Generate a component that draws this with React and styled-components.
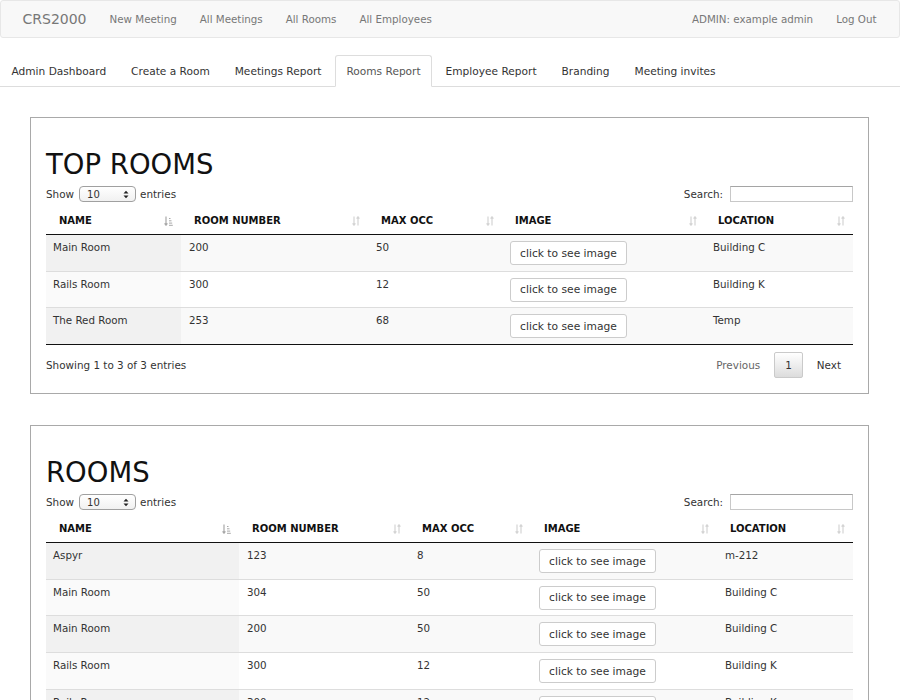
import React from "react";
import styled, { createGlobalStyle } from "styled-components";

const GlobalStyle = createGlobalStyle`
  body {
    margin: 0;
    background: #ffffff;
    color: #333333;
    font-family: "DejaVu Sans", Verdana, sans-serif;
    font-size: 10.4px;
  }
  * { box-sizing: border-box; }
`;

const topRooms = [
  ["Main Room", "200", "50", "Building C"],
  ["Rails Room", "300", "12", "Building K"],
  ["The Red Room", "253", "68", "Temp"],
];

const allRooms = [
  ["Aspyr", "123", "8", "m-212"],
  ["Main Room", "304", "50", "Building C"],
  ["Main Room", "200", "50", "Building C"],
  ["Rails Room", "300", "12", "Building K"],
  ["Rails Room", "300", "12", "Building K"],
  ["The Red Room", "253", "68", "Temp"],
];

const columns = ["NAME", "ROOM NUMBER", "MAX OCC", "IMAGE", "LOCATION"];

function SortBoth() {
  return (
    <svg width="8" height="10" viewBox="0 0 8 10">
      <g stroke="#d4d4d4" strokeWidth="1.2" fill="none">
        <path d="M2 0.5v8.5M0.6 7.4L2 9.2 3.4 7.4" />
        <path d="M6 9.5V1M4.6 2.6L6 0.8 7.4 2.6" />
      </g>
    </svg>
  );
}

function SortAsc() {
  return (
    <svg width="9" height="10" viewBox="0 0 9 10">
      <g stroke="#a8a8a8" strokeWidth="1.2" fill="none">
        <path d="M2 0.5v8.5M0.6 7.4L2 9.2 3.4 7.4" />
        <path d="M5 2.5h1.5M5 4.8h2.5M5 7.1h3.2M5 9.3h3.8" strokeWidth="1" />
      </g>
    </svg>
  );
}

function SelectArrows() {
  return (
    <svg width="6" height="9" viewBox="0 0 6 9">
      <path d="M0.5 3.6L3 0.8 5.5 3.6z M0.5 5.4L3 8.2 5.5 5.4z" fill="#222" />
    </svg>
  );
}

function RoomsTable({ title, rows, widths }) {
  return (
    <Panel>
      <Title>{title}</Title>
      <Controls>
        <Length>
          Show
          <FakeSelect>
            <span>10</span>
            <SelectArrows />
          </FakeSelect>
          entries
        </Length>
        <Filter>
          Search:
          <SearchInput type="text" />
        </Filter>
      </Controls>
      <Table>
        <colgroup>
          {widths.map((w, i) => (
            <col key={i} style={{ width: w }} />
          ))}
        </colgroup>
        <thead>
          <tr>
            {columns.map((c, i) => (
              <Th key={c}>
                <HeadInner>
                  <span>{c}</span>
                  {i === 0 ? <SortAsc /> : <SortBoth />}
                </HeadInner>
              </Th>
            ))}
          </tr>
        </thead>
        <tbody>
          {rows.map((r, i) => (
            <Row key={i} $odd={i % 2 === 0}>
              <SortedCell>{r[0]}</SortedCell>
              <Td>{r[1]}</Td>
              <Td>{r[2]}</Td>
              <Td>
                <ImageButton>click to see image</ImageButton>
              </Td>
              <Td>{r[3]}</Td>
            </Row>
          ))}
        </tbody>
      </Table>
      <Footer>
        <span>
          Showing 1 to {rows.length} of {rows.length} entries
        </span>
        <Paginate>
          <PageButton $disabled>Previous</PageButton>
          <PageButton $current>1</PageButton>
          <PageButton>Next</PageButton>
        </Paginate>
      </Footer>
    </Panel>
  );
}

export default function App() {
  return (
    <>
      <GlobalStyle />
      <Navbar>
        <NavLeft>
          <Brand>CRS2000</Brand>
          <NavLink>New Meeting</NavLink>
          <NavLink>All Meetings</NavLink>
          <NavLink>All Rooms</NavLink>
          <NavLink>All Employees</NavLink>
        </NavLeft>
        <NavLeft>
          <NavLink>ADMIN: example admin</NavLink>
          <NavLink>Log Out</NavLink>
        </NavLeft>
      </Navbar>
      <Tabs>
        <Tab>Admin Dashboard</Tab>
        <Tab>Create a Room</Tab>
        <Tab>Meetings Report</Tab>
        <Tab $active>Rooms Report</Tab>
        <Tab>Employee Report</Tab>
        <Tab>Branding</Tab>
        <Tab>Meeting invites</Tab>
      </Tabs>
      <Page>
        <RoomsTable
          title="TOP ROOMS"
          rows={topRooms}
          widths={[135, 187, 134, 203, 148]}
        />
        <RoomsTable
          title="ROOMS"
          rows={allRooms}
          widths={[193, 170, 122, 186, 136]}
        />
      </Page>
    </>
  );
}

const Navbar = styled.nav`
  height: 38px;
  display: flex;
  align-items: center;
  justify-content: space-between;
  padding: 0 11px 0 10px;
  background: #f8f8f8;
  border: 1px solid #e7e7e7;
  border-radius: 3px;
  margin-bottom: 17px;
`;

const NavLeft = styled.div`
  display: flex;
  align-items: center;
`;

const Brand = styled.span`
  font-size: 14px;
  color: #777777;
  padding: 0 11.5px;
`;

const NavLink = styled.span`
  font-size: 10.3px;
  color: #777777;
  padding: 0 11.5px;
`;

const Tabs = styled.ul`
  display: flex;
  list-style: none;
  margin: 0;
  padding: 0;
  border-bottom: 1px solid #dddddd;
`;

const Tab = styled.li`
  font-size: 10.6px;
  line-height: 15px;
  padding: 7.5px 10.5px;
  margin-right: 2px;
  margin-bottom: -1px;
  color: ${(p) => (p.$active ? "#555555" : "#333333")};
  background: ${(p) => (p.$active ? "#ffffff" : "transparent")};
  border: 1px solid ${(p) => (p.$active ? "#dddddd" : "transparent")};
  border-bottom-color: transparent;
  border-radius: 3px 3px 0 0;
`;

const Page = styled.main`
  padding: 30px 31px 0 30px;
  display: flex;
  flex-direction: column;
  gap: 31px;
`;

const Panel = styled.section`
  border: 1px solid #a9a9a9;
  padding: 0 15px 15px;
`;

const Title = styled.h1`
  margin: 31px 0 6px;
  font-size: 27.5px;
  line-height: 30px;
  font-weight: normal;
  color: #111111;
`;

const Controls = styled.div`
  display: flex;
  justify-content: space-between;
  align-items: center;
  height: 18px;
  margin-bottom: 3px;
`;

const Length = styled.label`
  display: flex;
  align-items: center;
  gap: 4px;
`;

const FakeSelect = styled.span`
  display: inline-flex;
  align-items: center;
  justify-content: space-between;
  width: 57px;
  height: 16px;
  padding: 0 6px 0 7px;
  border: 1px solid #a0a0a0;
  border-radius: 4px;
  background: linear-gradient(#ffffff, #f1f1f1);
  font-size: 10px;
  margin-left: 1px;
`;

const Filter = styled.label`
  display: flex;
  align-items: center;
  gap: 7px;
`;

const SearchInput = styled.input`
  width: 123px;
  height: 16px;
  border: 1px solid #c8c8c8;
  border-top-color: #a5a5a5;
  padding: 0 3px;
  font: inherit;
`;

const Table = styled.table`
  width: 100%;
  table-layout: fixed;
  border-collapse: collapse;
  border-bottom: 1px solid #111111;
`;

const Th = styled.th`
  padding: 8px 8px 7px 13px;
  font-size: 10px;
  line-height: 13px;
  font-weight: bold;
  text-align: left;
  color: #111111;
  border-bottom: 1px solid #111111;
`;

const HeadInner = styled.div`
  display: flex;
  align-items: center;
  justify-content: space-between;
`;

const Row = styled.tr`
  background: ${(p) => (p.$odd ? "#f9f9f9" : "#ffffff")};
  border-top: 1px solid #dddddd;

  &:first-child {
    border-top: none;
  }

  td:first-child {
    background: ${(p) => (p.$odd ? "#f1f1f1" : "#fafafa")};
  }
`;

const Td = styled.td`
  padding: 5px 7px 5.7px 8px;
  font-size: 10.3px;
  line-height: 14px;
  vertical-align: top;
`;

const SortedCell = styled(Td)`
  padding-left: 7px;
`;

const ImageButton = styled.button`
  display: block;
  height: 24px;
  width: 117px;
  padding: 0;
  margin-top: 1px;
  font-family: inherit;
  font-size: 10.7px;
  color: #333333;
  background: #ffffff;
  border: 1px solid #cccccc;
  border-radius: 3px;
`;

const Footer = styled.div`
  display: flex;
  justify-content: space-between;
  align-items: center;
  padding-top: 7px;
`;

const Paginate = styled.div`
  display: flex;
  align-items: center;
`;

const PageButton = styled.span`
  height: 26px;
  line-height: 24px;
  padding: 0 ${(p) => (p.$current ? "10px" : "11px")};
  margin-left: 2px;
  color: ${(p) => (p.$disabled ? "#666666" : "#333333")};
  border: 1px solid ${(p) => (p.$current ? "#cacaca" : "transparent")};
  border-radius: 2px;
  background: ${(p) =>
    p.$current ? "linear-gradient(#ffffff, #dcdcdc)" : "transparent"};
`;
